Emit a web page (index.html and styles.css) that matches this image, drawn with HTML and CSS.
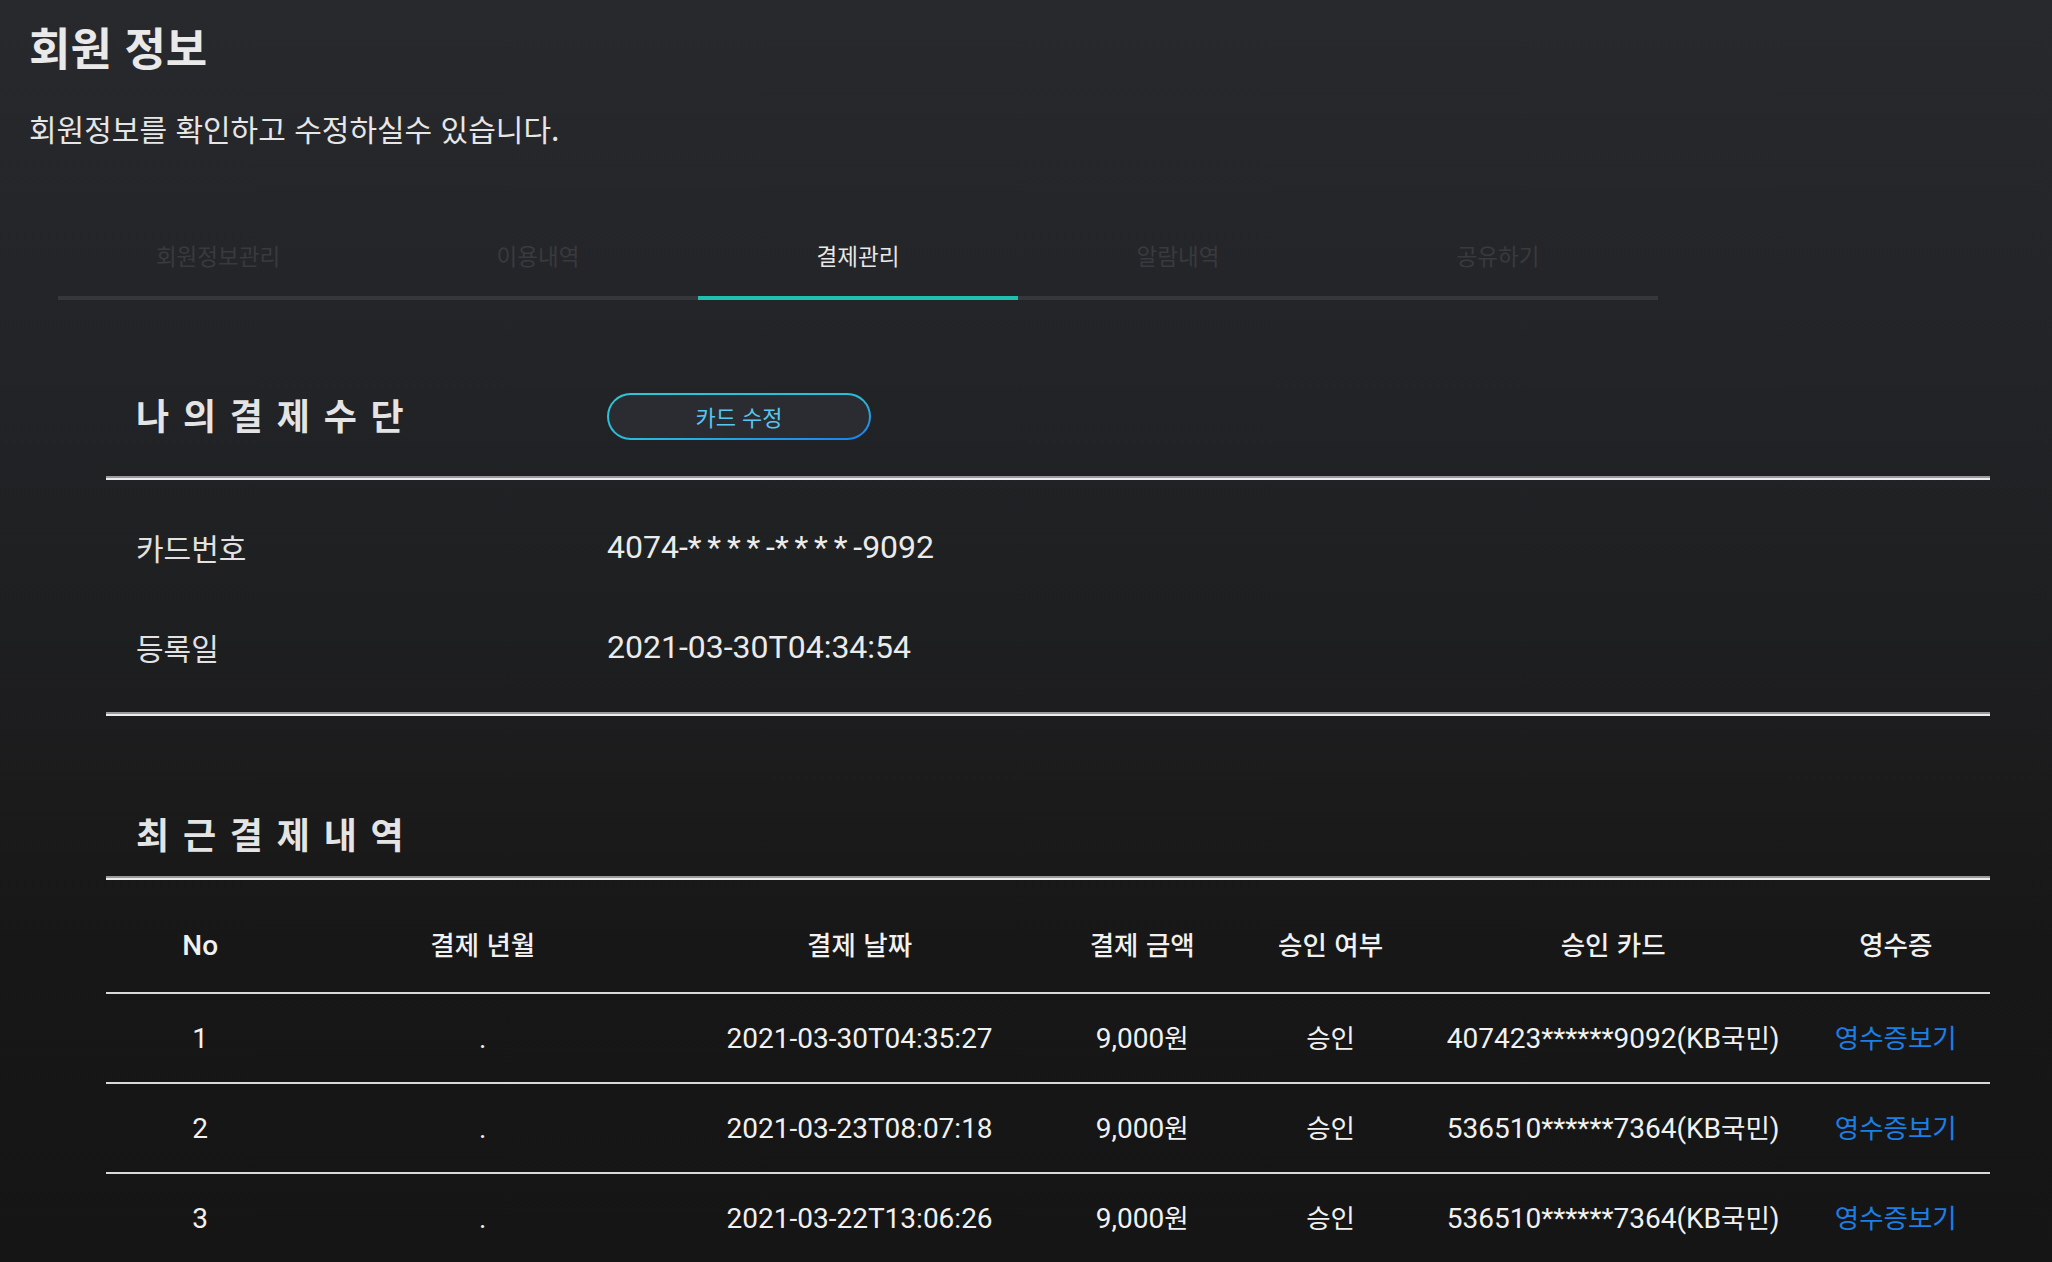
FILE: index.html
```html
<!DOCTYPE html>
<html lang="ko">
<head>
<meta charset="utf-8">
<title>회원 정보</title>
<link rel="stylesheet" href="styles.css">
</head>
<body>
<div class="page">
  <header class="page-head">
    <h1 class="page-title">회원 정보</h1>
    <p class="page-desc">회원정보를 확인하고 수정하실수 있습니다.</p>
  </header>

  <nav class="tabs">
    <a class="tab">회원정보관리</a>
    <a class="tab">이용내역</a>
    <a class="tab tab-active">결제관리</a>
    <a class="tab">알람내역</a>
    <a class="tab">공유하기</a>
  </nav>

  <main class="content">
    <section class="block">
      <div class="sec-head sec-head-method">
        <h2 class="sec-title">나의결제수단</h2>
        <div class="sec-action"><button class="btn-card" type="button">카드 수정</button></div>
      </div>
      <div class="rule"></div>
      <dl class="info">
        <div class="info-row">
          <dt class="info-label">카드번호</dt>
          <dd class="info-value">4074-<span class="mask">****</span>-<span class="mask">****</span>-9092</dd>
        </div>
        <div class="info-row">
          <dt class="info-label">등록일</dt>
          <dd class="info-value">2021-03-30T04:34:54</dd>
        </div>
      </dl>
      <div class="rule"></div>
    </section>

    <section class="block">
      <div class="sec-head sec-head-history">
        <h2 class="sec-title">최근결제내역</h2>
      </div>
      <div class="rule"></div>
      <table class="pay-table">
        <colgroup>
          <col class="c-sm"><col class="c-lg"><col class="c-lg"><col class="c-sm"><col class="c-sm"><col class="c-lg"><col class="c-sm">
        </colgroup>
        <thead>
          <tr>
            <th>No</th>
            <th><span class="ko">결제 년월</span></th>
            <th><span class="ko">결제 날짜</span></th>
            <th><span class="ko">결제 금액</span></th>
            <th><span class="ko">승인 여부</span></th>
            <th><span class="ko">승인 카드</span></th>
            <th><span class="ko">영수증</span></th>
          </tr>
        </thead>
        <tbody>
          <tr>
            <td>1</td>
            <td>.</td>
            <td>2021-03-30T04:35:27</td>
            <td>9,000<span class="ko">원</span></td>
            <td><span class="ko">승인</span></td>
            <td>407423******9092(KB<span class="ko">국민</span>)</td>
            <td><a class="ko receipt">영수증보기</a></td>
          </tr>
          <tr>
            <td>2</td>
            <td>.</td>
            <td>2021-03-23T08:07:18</td>
            <td>9,000<span class="ko">원</span></td>
            <td><span class="ko">승인</span></td>
            <td>536510******7364(KB<span class="ko">국민</span>)</td>
            <td><a class="ko receipt">영수증보기</a></td>
          </tr>
          <tr>
            <td>3</td>
            <td>.</td>
            <td>2021-03-22T13:06:26</td>
            <td>9,000<span class="ko">원</span></td>
            <td><span class="ko">승인</span></td>
            <td>536510******7364(KB<span class="ko">국민</span>)</td>
            <td><a class="ko receipt">영수증보기</a></td>
          </tr>
        </tbody>
      </table>
    </section>
  </main>
</div>
</body>
</html>
```

FILE: styles.css
```css
* {
  box-sizing: border-box;
}

html {
  background: #151515;
}

body {
  margin: 0;
  min-height: 1262px;
  font-family: Roboto, "Noto Sans CJK KR", sans-serif;
  color: #e8e8e8;
  background: linear-gradient(180deg, #28292d 0%, #232427 28%, #1f2022 45%, #1b1b1c 63%, #171717 75%, #151515 100%);
}

.page {
  min-height: 1262px;
}

/* ---------- page header ---------- */
.page-head {
  padding-left: 29px;
}

.page-title {
  margin: 0;
  padding-top: 18px;
  font-family: "Noto Sans CJK KR", sans-serif;
  font-size: 45px;
  font-weight: 700;
  line-height: 58px;
  color: #e9e9e9;
}

.page-desc {
  margin: 32px 0 0;
  font-family: "Noto Sans CJK KR", sans-serif;
  font-size: 30px;
  line-height: 40px;
  color: #e6e6e6;
}

/* ---------- tabs ---------- */
.tabs {
  display: flex;
  margin: 92px 0 0 58px;
  width: 1600px;
}

.tab {
  width: 320px;
  padding-bottom: 26px;
  border-bottom: 4px solid #36373a;
  text-align: center;
  font-family: "Noto Sans CJK KR", sans-serif;
  font-size: 22.5px;
  line-height: 30px;
  color: #393a3d;
}

.tab-active {
  color: #e8e8e8;
  border-bottom-color: #1fc1ad;
}

/* ---------- content ---------- */
.content {
  margin-left: 106px;
  width: 1884px;
}

.sec-head {
  display: grid;
  grid-template-columns: 25% 1fr;
  align-items: center;
}

.sec-head-method {
  padding: 92px 0 36px;
}

.sec-head-history {
  padding: 95px 0 17px;
}

.sec-title {
  margin: 0;
  padding-left: 30px;
  padding-bottom: 4px;
  font-family: "Noto Sans CJK KR", sans-serif;
  font-size: 36px;
  font-weight: 700;
  line-height: 44px;
  letter-spacing: 13.8px;
  color: #e4e4e4;
  white-space: nowrap;
}

.sec-action {
  padding-left: 30px;
  display: flex;
  align-items: center;
}

.btn-card {
  width: 264px;
  height: 47px;
  padding: 0;
  border: 2px solid transparent;
  border-radius: 24px;
  background:
    linear-gradient(#2a2c31, #2a2c31) padding-box,
    linear-gradient(to bottom right, #31c6d3 0%, #2abadb 55%, #1a7ef2 100%) border-box;
  color: #58c6ef;
  font-family: "Noto Sans CJK KR", sans-serif;
  font-size: 22px;
  font-weight: 400;
  line-height: 30px;
}

.rule {
  height: 4px;
  background: linear-gradient(180deg, #9a9a9a 0 50%, #ececec 50% 100%);
}

/* ---------- card info ---------- */
.info {
  margin: 0;
  padding: 17px 0 15px;
}

.info-row {
  display: grid;
  grid-template-columns: 25% 1fr;
  align-items: center;
  height: 100px;
}

.info-label,
.info-value {
  margin: 0;
  padding-left: 30px;
  line-height: 48px;
}

.info-label {
  font-family: "Noto Sans CJK KR", sans-serif;
  font-size: 30px;
  color: #e2e2e2;
}

.info-value {
  font-family: Roboto, sans-serif;
  font-size: 32px;
  color: #ebebeb;
}

.mask {
  letter-spacing: 5.8px;
}

/* ---------- table ---------- */
.pay-table {
  width: 100%;
  table-layout: fixed;
  border-collapse: separate;
  border-spacing: 0;
}

.c-sm {
  width: 10%;
}

.c-lg {
  width: 20%;
}

.pay-table th,
.pay-table td {
  text-align: center;
  font-size: 28px;
  line-height: 40px;
  color: #f1f1f1;
  border-bottom: 2px solid #d9d9d9;
  white-space: nowrap;
}

.pay-table th {
  padding: 46px 0 26px;
  font-weight: 500;
}

.pay-table td {
  padding: 25px 0 23px;
  font-weight: 400;
}

.ko {
  font-family: "Noto Sans CJK KR", sans-serif;
  font-size: 26.5px;
  line-height: 1;
}

.receipt {
  color: #1b7fe8;
  text-decoration: none;
}
```
